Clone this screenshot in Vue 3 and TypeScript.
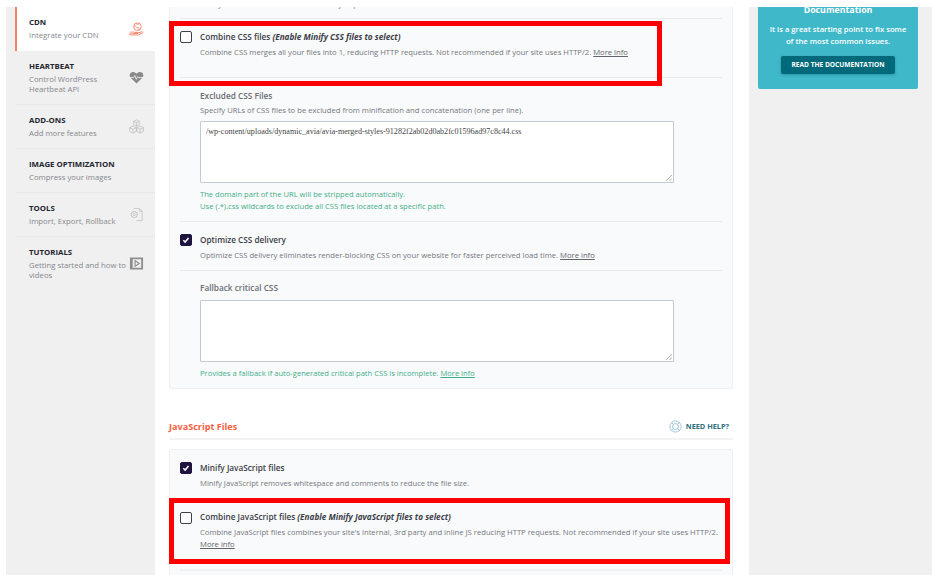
<script setup lang="ts">
interface NavItem { title: string; desc: string; active?: boolean; icon: string }
const nav: NavItem[] = [
  { title: 'CDN', desc: 'Integrate your CDN', active: true, icon: 'cdn' },
  { title: 'HEARTBEAT', desc: 'Control WordPress Heartbeat API', icon: 'heart' },
  { title: 'ADD-ONS', desc: 'Add more features', icon: 'addons' },
  { title: 'IMAGE OPTIMIZATION', desc: 'Compress your images', icon: '' },
  { title: 'TOOLS', desc: 'Import, Export, Rollback', icon: 'tools' },
  { title: 'TUTORIALS', desc: 'Getting started and how to videos', icon: 'video' }
]
</script>

<template>
  <div class="page">
    <aside class="side">
      <div v-for="n in nav" :key="n.title" class="nav" :class="{ active: n.active }">
        <div class="nav-text">
          <div class="nav-title">{{ n.title }}</div>
          <div class="nav-desc">{{ n.desc }}</div>
        </div>
        <svg v-if="n.icon === 'cdn'" class="nav-icon" viewBox="0 0 16 16" fill="none" stroke="#f4795b" stroke-width="0.9">
          <circle cx="9" cy="5" r="4" />
          <path d="M5.500 4c2 0 2 2 4 2s1 2 1 3M7.500 1.500c0 1.500 3 1 3.500 0" />
          <path d="M.5 12c1-1.500 3-1.500 5-1h3.500c1 0 1 1.200 0 1.200H6.500M9 11.800l4.500-1.300c1.200-.2 1.500.8.700 1.300l-4.200 2H4l-1.500.3-2-1z" />
        </svg>
        <svg v-else-if="n.icon === 'heart'" class="nav-icon" viewBox="0 0 16 16">
          <path fill="#8a8a8a" d="M8 14.500L1.800 8.300C.2 6.600.4 3.800 2.300 2.700c1.900-1.100 4-.5 5.700 1.300 1.700-1.800 3.800-2.400 5.700-1.300 1.900 1.100 2.100 3.900.5 5.600z" />
          <path fill="none" stroke="#f0f0f0" stroke-width="0.9" d="M1 8h4l1.200-2 1.600 4 1.400-3 .8 1H15" />
        </svg>
        <svg v-else-if="n.icon === 'addons'" class="nav-icon" viewBox="0 0 16 16" fill="none" stroke="#b5b5b5" stroke-width="0.7">
          <path d="M8 1l3 1.500v3.500L8 7.500 5 6V2.500zM5 2.500L8 4l3-1.500M8 4v3.500" />
          <path d="M4.200 7.500l3.500 1.700v4.100L4.200 15 .7 13.300V9.200zM.7 9.200l3.500 1.700 3.500-1.700M4.200 10.900V15" />
          <path d="M11.800 7.500l3.500 1.700v4.100L11.800 15l-3.500-1.700V9.200zM8.300 9.200l3.500 1.700 3.500-1.700M11.800 10.900V15" />
        </svg>
        <svg v-else-if="n.icon === 'tools'" class="nav-icon" viewBox="0 0 16 16" fill="none" stroke="#bdbdbd" stroke-width="0.8">
          <path d="M5 1.500h6l3 3v10H8" />
          <path d="M11 1.500v3h3" />
          <circle cx="5.500" cy="8" r="3.200" stroke-dasharray="1.200 .5" stroke-width="1.300" />
          <circle cx="5.500" cy="8" r="1.200" />
        </svg>
        <svg v-else-if="n.icon === 'video'" class="nav-icon" viewBox="0 0 16 16">
          <path fill="#8e8e8e" fill-rule="evenodd" d="M1 1.500h14v13H1zM4 3.500v9h9v-9z" />
          <path fill="none" stroke="#8e8e8e" stroke-width="1.200" d="M6.500 5l4.500 3-4.500 3z" />
        </svg>
      </div>
    </aside>

    <main class="main">
      <section class="card card-top">
        <div class="top-cut">Minify CSS reduces the file size and may improve load time.</div>
        <div class="opt opt-first">
          <span class="box"></span>
          <div>
            <div class="opt-title">Combine CSS files <em>(Enable Minify CSS files to select)</em></div>
            <div class="opt-desc">Combine CSS merges all your files into 1, reducing HTTP requests. Not recommended if your site uses HTTP/2. <a>More info</a></div>
          </div>
        </div>
        <div class="field field-excl">
          <div class="field-label">Excluded CSS Files</div>
          <div class="opt-desc">Specify URLs of CSS files to be excluded from minification and concatenation (one per line).</div>
          <div class="area">
            <span class="mono">/wp-content/uploads/dynamic_avia/avia-merged-styles-91282f2ab02d0ab2fc01596ad97c8c44.css</span>
            <svg class="grip" viewBox="0 0 8 8" fill="none" stroke="#888" stroke-width="0.8"><path d="M1 8l7-7M5 8l3-3" /></svg>
          </div>
          <div class="hint hint-a">The domain part of the URL will be stripped automatically.<br />Use (.*).css wildcards to exclude all CSS files located at a specific path.</div>
        </div>
        <div class="opt opt-delivery">
          <span class="box checked"><svg viewBox="0 0 12 12"><path d="M2.800 6.200l2.200 2.300 4-5" fill="none" stroke="#fff" stroke-width="1.800" /></svg></span>
          <div>
            <div class="opt-title">Optimize CSS delivery</div>
            <div class="opt-desc">Optimize CSS delivery eliminates render-blocking CSS on your website for faster perceived load time. <a>More info</a></div>
          </div>
        </div>
        <div class="field field-fallback">
          <div class="field-label">Fallback critical CSS</div>
          <div class="area area-b">
            <svg class="grip" viewBox="0 0 8 8" fill="none" stroke="#888" stroke-width="0.8"><path d="M1 8l7-7M5 8l3-3" /></svg>
          </div>
          <div class="hint hint-b">Provides a fallback if auto-generated critical path CSS is incomplete. <a>More info</a></div>
        </div>
      </section>

      <header class="section-head">
        <h2>JavaScript Files</h2>
        <div class="help">
          <svg viewBox="0 0 14 14" fill="none" stroke="#7fb8cc" stroke-width="0.8">
            <circle cx="7" cy="7" r="6" />
            <circle cx="7" cy="7" r="3.200" />
            <path d="M2.800 2.800l2 2M11.200 2.800l-2 2M2.800 11.200l2-2M11.200 11.200l-2-2" />
          </svg>
          <span>NEED HELP?</span>
        </div>
      </header>

      <section class="card card-js">
        <div class="opt opt-minify">
          <span class="box checked"><svg viewBox="0 0 12 12"><path d="M2.800 6.200l2.200 2.300 4-5" fill="none" stroke="#fff" stroke-width="1.800" /></svg></span>
          <div>
            <div class="opt-title">Minify JavaScript files</div>
            <div class="opt-desc">Minify JavaScript removes whitespace and comments to reduce the file size.</div>
          </div>
        </div>
        <div class="opt opt-combine">
          <span class="box"></span>
          <div>
            <div class="opt-title">Combine JavaScript files <em>(Enable Minify JavaScript files to select)</em></div>
            <div class="opt-desc">Combine JavaScript files combines your site's internal, 3rd party and inline JS reducing HTTP requests. Not recommended if your site uses HTTP/2.<br /><a>More info</a></div>
          </div>
        </div>
        <div class="last-rule"></div>
      </section>

      <div class="mark mark-a"></div>
      <div class="mark mark-b"></div>
    </main>

    <aside class="right">
      <div class="doc">
        <h3>Documentation</h3>
        <p>It is a great starting point to fix some of the most common issues.</p>
        <span class="doc-btn">READ THE DOCUMENTATION</span>
      </div>
    </aside>
  </div>
</template>

<style>
html, body { margin: 0; background: #fff; overflow: hidden; }
</style>

<style scoped>
.page {
  display: flex;
  height: 568px;
  margin-top: 7px;
  margin-left: 6px;
  overflow: hidden;
  font-family: "Open Sans", "Liberation Sans", sans-serif;
  font-size: 7.66px;
  color: #40424a;
}
.side { width: 149px; flex: none; background: #f0f0f0; }
.nav {
  display: flex;
  align-items: center;
  gap: 2px;
  height: 43px;
  margin-left: 9px;
  padding-left: 14px;
  padding-right: 11px;
  border-bottom: 1px solid #e6e8ea;
}
.nav:nth-child(2) { height: 53px; }
.nav:nth-child(6) { border: 0; height: 53px; }
.nav.active { background: #fff; border-left: 2px solid #f4816a; padding-left: 12px; border-bottom: 0; height: 44px; }
.active .nav-text { margin-top: -1px; }
.nav-text { flex: 1; min-width: 0; }
.nav-title { font-weight: 700; font-size: 7.85px; line-height: 11px; color: #23252e; }
.nav-desc { font-size: 7.75px; line-height: 10px; color: #85888e; margin-top: 2px; }
.nav-icon { width: 15px; height: 15px; flex: none; }

.main {
  position: relative;
  width: 594px;
  flex: none;
  background: #fff;
  padding: 0 16px 0 14px;
  box-sizing: border-box;
}
.card { background: #f9fafb; border: 1px solid #eef0f2; border-radius: 2px; padding: 0 10px; }
.card-top { margin-top: -9px; padding-bottom: 9px; border-top: 0; }
.top-cut { height: 12px; line-height: 12px; padding-left: 20px; color: #74777e; white-space: nowrap; }
.opt { display: flex; gap: 8px; }
.box {
  flex: none;
  width: 10px;
  height: 10px;
  border: 1px solid #40404a;
  border-radius: 2px;
  background: #fff;
}
.box.checked { background: #1f1440; border-color: #1f1440; display: flex; }
.box svg { width: 10px; height: 10px; }
.opt-title { font-size: 8.22px; line-height: 12px; font-weight: 600; color: #3b3d47; white-space: nowrap; }
.opt-title em { font-weight: 700; }
.opt-desc { font-size: 7.66px; line-height: 12px; color: #74777e; margin-top: 3px; white-space: nowrap; }
.opt-desc a { text-decoration: underline; color: #62656c; }
.opt-first { margin-top: 8px; border-top: 1px solid #e8eaec; border-bottom: 1px solid #e8eaec; padding: 12px 0 19px; }
.field { padding-left: 20px; }
.field-label { font-size: 8.27px; line-height: 12px; font-weight: 600; color: #6a6d74; }
.field-excl { padding-top: 12px; }
.field-excl .opt-desc { margin-top: 2px; }
.area {
  position: relative;
  width: 474px;
  height: 62px;
  margin-top: 5px;
  background: #fff;
  border: 1px solid #c3cad6;
  box-sizing: border-box;
  padding: 4px 5px;
  border-radius: 1px;
}
.grip { position: absolute; right: 1px; bottom: 1px; width: 7px; height: 7px; }
.mono { font-family: "Liberation Serif", serif; font-size: 8.08px; color: #444; white-space: nowrap; }
.hint { font-size: 7.6px; line-height: 12px; color: #3fae88; }
.hint a { text-decoration: underline; }
.hint-a { margin-top: 5px; }
.opt-delivery { margin-top: 9px; border-top: 1px solid #e8eaec; border-bottom: 1px solid #e8eaec; padding: 12px 0 9px; }
.field-fallback { padding-top: 11px; }
.area-b { margin-top: 6px; }
.hint-b { margin-top: 5px; }

.section-head {
  display: flex;
  align-items: center;
  justify-content: space-between;
  margin-top: 25px;
  height: 26px;
  border-bottom: 2px solid #f2f3f4;
  box-sizing: border-box;
  padding-right: 4px;
}
.section-head h2 { margin: 0; font-size: 9.1px; font-weight: 700; color: #f8603f; }
.help { display: flex; align-items: center; gap: 4px; font-size: 7.3px; font-weight: 700; color: #2f6f80; }
.help svg { width: 13px; height: 13px; }
.card-js { margin-top: 9px; }
.opt-minify { padding-top: 12px; }
.opt-combine { margin-top: 22px; }
.opt-combine .box { margin-top: 1px; }
.last-rule { margin-top: 19px; height: 20px; border-top: 2px solid #eef0f2; }

.mark { position: absolute; border: 5px solid #ff0000; box-sizing: border-box; pointer-events: none; }
.mark-a { left: 14px; top: 14px; width: 493px; height: 65px; }
.mark-b { left: 14px; top: 491px; width: 561px; height: 66px; }

.right { flex: 1; background: #f0f0f0; padding: 0 0 0 9px; }
.doc {
  width: 160px;
  height: 82px;
  background: #3fb8c9;
  border-radius: 0 0 2px 2px;
  color: #fff;
  text-align: center;
  display: flex;
  flex-direction: column;
  align-items: center;
}
.doc h3 { margin: 0; font-size: 8.8px; line-height: 6px; font-weight: 700; }
.doc p { margin: 10px 10px 0; font-size: 7.7px; line-height: 12px; font-weight: 600; }
.doc-btn {
  margin-top: 9px;
  background: #006a7a;
  border-radius: 2px;
  padding: 0 10px;
  height: 18px;
  line-height: 18px;
  font-size: 6.6px;
  font-weight: 700;
  white-space: nowrap;
  box-shadow: 0 1px 3px rgba(0, 80, 95, 0.35);
}
</style>
